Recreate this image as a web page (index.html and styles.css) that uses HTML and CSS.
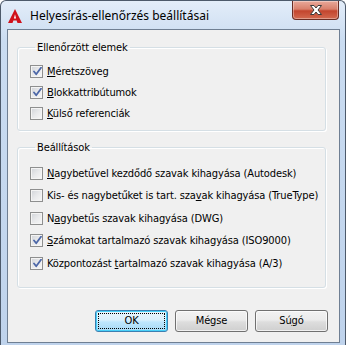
FILE: index.html
```html
<!DOCTYPE html>
<html lang="hu">
<head>
<meta charset="utf-8">
<link rel="stylesheet" href="styles.css">
</head>
<body>
<div class="window">
  <div class="titlebar">
    <svg class="app-icon" width="16" height="16" viewBox="0 0 16 16">
      <path d="M8 1 L15 15 L10.5 15 L9.6 12.6 L6.4 12.6 L5.5 15 L1 15 Z" fill="#d0111b"/>
      <path d="M8 6.2 L9.1 10.4 L6.9 10.4 Z" fill="#fff"/>
    </svg>
    <span class="title">Helyesírás-ellenőrzés beállításai</span>
    <div class="close">
      <svg width="16" height="12" viewBox="0 0 16 12">
        <path d="M2.5 1.5 L6 1.5 L8 4 L10 1.5 L13.5 1.5 L10 6 L13.5 10.5 L10 10.5 L8 8 L6 10.5 L2.5 10.5 L6 6 Z" fill="#fff" stroke="#3b3b3b" stroke-width="1" stroke-linejoin="round"/>
      </svg>
    </div>
  </div>
  <div class="client">
    <fieldset class="group first">
      <legend>Ellenőrzött elemek</legend>
      <div class="row"><span class="cb checked"></span><span><u>M</u>éretszöveg</span></div>
      <div class="row"><span class="cb checked"></span><span><u>B</u>lokkattribútumok</span></div>
      <div class="row"><span class="cb"></span><span><u>K</u>ülső referenciák</span></div>
    </fieldset>
    <fieldset class="group second">
      <legend>Beállítások</legend>
      <div class="row"><span class="cb"></span><span><u>N</u>agybetűvel kezdődő szavak kihagyása (Autodesk)</span></div>
      <div class="row"><span class="cb"></span><span>Kis- és nagybetűket is tart. sza<u>v</u>ak kihagyása (TrueType)</span></div>
      <div class="row"><span class="cb"></span><span>N<u>a</u>gybetűs szavak kihagyása (DWG)</span></div>
      <div class="row"><span class="cb checked"></span><span><u>S</u>zámokat tartalmazó szavak kihagyása (ISO9000)</span></div>
      <div class="row"><span class="cb checked"></span><span>Központozást <u>t</u>artalmazó szavak kihagyása (A/3)</span></div>
    </fieldset>
    <div class="buttons">
      <div class="btn default"><span class="focus">OK</span></div>
      <div class="btn">Mégse</div>
      <div class="btn">Sú<u>g</u>ó</div>
    </div>
  </div>
</div>
</body>
</html>
```

FILE: styles.css
```css
* { box-sizing: border-box; }
html, body { margin: 0; padding: 0; background: #fff; }
.window {
  width: 346px;
  height: 345px;
  border: 1px solid #4d5a6b;
  border-bottom: none;
  border-radius: 6px 6px 0 0;
  background: linear-gradient(#e3edf9 0px, #cadcf1 40px, #bfd3ec 100%);
  display: flex;
  flex-direction: column;
  overflow: hidden;
  font-family: "DejaVu Sans Condensed", "DejaVu Sans", sans-serif;
  font-stretch: condensed;
  font-size: 11px;
  letter-spacing: -0.12px;
  color: #000;
}
.titlebar {
  height: 28px;
  flex: none;
  display: flex;
  align-items: flex-start;
  padding-left: 6px;
}
.app-icon { margin-top: 7px; flex: none; }
.title {
  margin-left: 7px;
  margin-top: 7px;
  font-family: "Noto Sans", "Open Sans", sans-serif;
  font-stretch: normal;
  letter-spacing: 0;
  font-size: 12px;
  line-height: 16px;
  color: #000;
}
.close {
  margin-left: auto;
  margin-right: 6px;
  width: 47px;
  height: 19px;
  border: 1px solid #6a2d24;
  border-top: none;
  border-radius: 0 0 4px 4px;
  background: linear-gradient(#e9a99a 0%, #d9806c 45%, #c3452e 55%, #d36a50 100%);
  display: flex;
  align-items: center;
  justify-content: center;
  box-shadow: inset 0 0 0 1px rgba(255,255,255,0.35);
}
.client {
  flex: 1;
  margin: 0 5px 2px 6px;
  border: 1px solid #6f7f93;
  background: #f0f0f0;
  padding: 11px 13px 0 9px;
  display: flex;
  flex-direction: column;
}
.group {
  margin: 0;
  border: 1px solid #d5dfe5;
  border-radius: 3px;
  box-shadow: inset 1px 1px 0 #fff, 1px 1px 0 #fff;
  padding: 7px 0 6px 12px;
}
.group legend {
  padding: 0 2px;
  margin-left: 5px;
  line-height: 13px;
  height: 13px;
}
.group.second { margin-top: 10px; padding-top: 8px; padding-bottom: 12px; }
.row {
  height: 21px;
  display: flex;
  align-items: center;
  gap: 4px;
  white-space: nowrap;
}
.second .row { height: 22.5px; }
.cb {
  width: 13px;
  height: 13px;
  flex: none;
  border: 1px solid #8e8f8f;
  background: linear-gradient(135deg, #d0d3d8 0%, #e8e9eb 50%, #f7f7f7 100%);
  box-shadow: inset 0 0 0 1px #f4f4f4;
  position: relative;
}
.cb.checked::after {
  content: "";
  position: absolute;
  left: 2px;
  top: 1px;
  width: 9px;
  height: 9px;
  background: url("data:image/svg+xml;utf8,<svg xmlns='http://www.w3.org/2000/svg' width='9' height='9' viewBox='0 0 9 9'><path d='M1 4.5 L3.2 7.3 L8 0.8' fill='none' stroke='%234d68a8' stroke-width='1.8' stroke-linejoin='round' stroke-linecap='round'/></svg>") no-repeat;
}
u { text-decoration: underline; text-underline-offset: 1px; }
.buttons {
  margin-top: 22px;
  display: flex;
  justify-content: flex-end;
  gap: 7px;
  margin-right: -2px;
}
.btn {
  width: 73px;
  height: 22px;
  border: 1px solid #707070;
  border-radius: 3px;
  background: linear-gradient(#f2f2f2 0%, #ebebeb 45%, #dddddd 55%, #cfcfcf 100%);
  box-shadow: inset 0 0 0 1px rgba(255,255,255,0.7);
  display: flex;
  align-items: center;
  justify-content: center;
  line-height: 13px;
}
.btn.default {
  border-color: #3c7fb1;
  background: linear-gradient(#eaf6fd 0%, #d9f0fc 45%, #bee6fd 55%, #a7d9f5 100%);
  box-shadow: inset 0 0 0 1px #48d0f8;
  padding: 2px;
}
.btn .focus {
  width: 100%;
  height: 100%;
  border: 1px dotted #000;
  display: flex;
  align-items: center;
  justify-content: center;
}
```
